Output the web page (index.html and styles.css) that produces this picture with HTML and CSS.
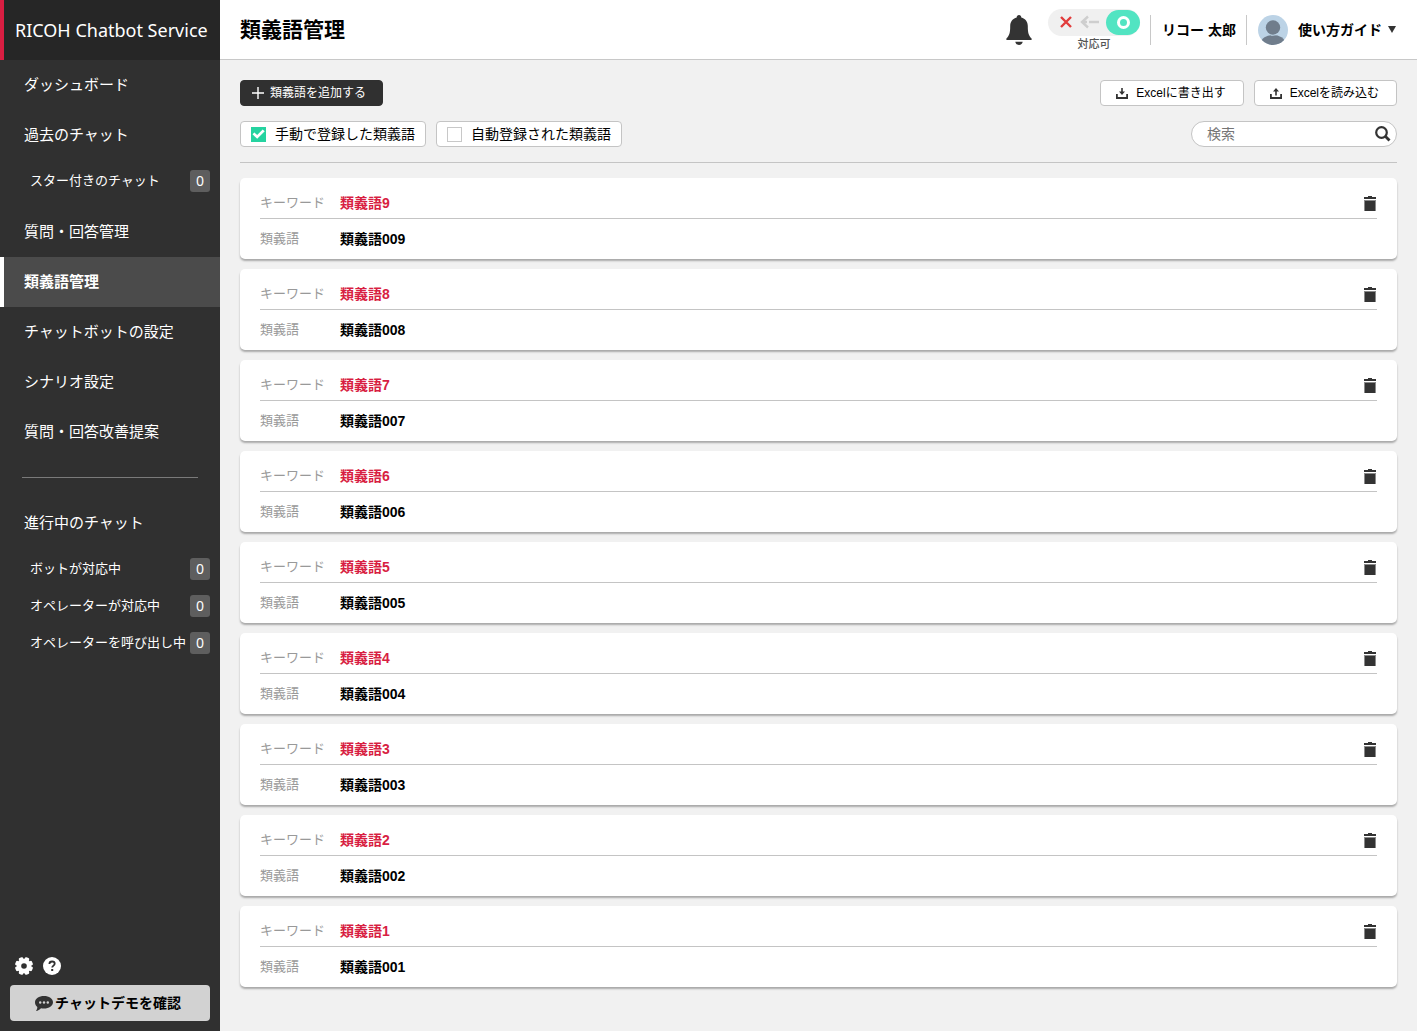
FILE: index.html
```html
<!DOCTYPE html>
<html lang="ja">
<head>
<meta charset="utf-8">
<meta name="viewport" content="width=device-width, initial-scale=1">
<title>類義語管理 | RICOH Chatbot Service</title>
<link rel="stylesheet" href="styles.css">
</head>
<body>
<svg class="sprite" width="0" height="0" aria-hidden="true">
  <symbol id="trash" viewBox="0 0 12 15">
    <path fill="#333" d="M4 0h4v1h4v2H0V1h4z"/>
    <path fill="#8a8a8a" d="M0 4h12v11H0z"/>
    <path fill="#333" d="M1 5h10v10H1z"/>
  </symbol>
</svg>
<aside class="sidebar">
  <a class="brand" href="#">RICOH Chatbot Service</a>
  <nav class="nav">
    <a class="nav-item" href="#">ダッシュボード</a>
    <a class="nav-item" href="#">過去のチャット</a>
    <div class="nav-sub">
      <a class="nav-subitem" href="#">スター付きのチャット<span class="count">0</span></a>
    </div>
    <a class="nav-item" href="#">質問・回答管理</a>
    <a class="nav-item is-active" href="#" aria-current="page">類義語管理</a>
    <a class="nav-item" href="#">チャットボットの設定</a>
    <a class="nav-item" href="#">シナリオ設定</a>
    <a class="nav-item" href="#">質問・回答改善提案</a>
    <hr class="nav-divider">
    <a class="nav-item" href="#">進行中のチャット</a>
    <div class="nav-sub">
      <a class="nav-subitem" href="#">ボットが対応中<span class="count">0</span></a>
      <a class="nav-subitem" href="#">オペレーターが対応中<span class="count">0</span></a>
      <a class="nav-subitem" href="#">オペレーターを呼び出し中<span class="count">0</span></a>
    </div>
  </nav>
  <div class="sidebar-foot">
    <div class="tools">
      <button class="icon-button" type="button" aria-label="設定">
        <svg width="18" height="18" viewBox="0 0 18 18"><g fill="#fff"><circle cx="9" cy="9" r="7.3"/><rect x="6.700" y="0" width="4.600" height="18" rx="1.200" transform="rotate(22.5 9 9)"/><rect x="6.700" y="0" width="4.600" height="18" rx="1.200" transform="rotate(67.5 9 9)"/><rect x="6.700" y="0" width="4.600" height="18" rx="1.200" transform="rotate(112.5 9 9)"/><rect x="6.700" y="0" width="4.600" height="18" rx="1.200" transform="rotate(157.5 9 9)"/></g><circle cx="9" cy="9" r="2.800" fill="#303030"/></svg>
      </button>
      <button class="icon-button" type="button" aria-label="ヘルプ">
        <svg width="18" height="18" viewBox="0 0 18 18"><circle cx="9" cy="9" r="9" fill="#fff"/><path d="M6.400 7c0-1.600 1.100-2.500 2.700-2.500s2.600.9 2.600 2.200c0 1.900-2.500 1.900-2.500 3.900" fill="none" stroke="#303030" stroke-width="1.800"/><rect x="8.200" y="12" width="2" height="2" fill="#303030"/></svg>
      </button>
    </div>
    <button class="demo" type="button">
      <svg width="18" height="15" viewBox="0 0 18 15"><path fill="#333" d="M9 0c5 0 9 2.700 9 6.300s-4 6.300-9 6.300c-1.100 0-2.100-.1-3-.4C4.700 13.600 3 14.700 1 15c.9-1.200 1.400-2.500 1.300-3.900C.9 9.900 0 8.200 0 6.300 0 2.700 4 0 9 0z"/><g fill="#d2d2d2"><circle cx="5.200" cy="6.500" r="1.200"/><circle cx="9" cy="6.500" r="1.200"/><circle cx="12.800" cy="6.500" r="1.200"/></g></svg>
      <span>チャットデモを確認</span>
    </button>
  </div>
</aside>
<div class="page">
  <header class="topbar">
    <h1 class="title">類義語管理</h1>
    <button class="icon-button bell" type="button" aria-label="通知">
      <svg width="26" height="30" viewBox="0 0 26 30"><path fill="#333" d="M13 0c1.400 0 2.300 1 2.300 2.400 4 1 6.500 4.100 6.500 8.600 0 7 .8 9.500 3.800 12.500V25H.4v-1.500c3-3 3.800-5.500 3.800-12.500 0-4.500 2.500-7.600 6.500-8.600C10.700 1 11.600 0 13 0zM9.300 26.800h7.400C16.500 28.600 15 30 13 30s-3.500-1.400-3.700-3.200z"/></svg>
    </button>
    <div class="status">
      <button class="switch" type="button" role="switch" aria-checked="true" aria-labelledby="status-label">
        <svg class="switch-off" width="42" height="14" viewBox="0 0 42 14" fill="none"><path d="M2 2l10 10M12 2L2 12" stroke="#e23c3c" stroke-width="2.400"/><path d="M29 1.500L23 7l6 5.500M24 7h4M30 7h10" stroke="#cecece" stroke-width="2.400"/></svg>
        <span class="knob"></span>
      </button>
      <span class="status-label" id="status-label">対応可</span>
    </div>
    <div class="user">リコー 太郎</div>
    <button class="guide" type="button">
      <svg width="30" height="30" viewBox="0 0 30 30"><defs><clipPath id="face"><circle cx="15" cy="15" r="15"/></clipPath></defs><g clip-path="url(#face)"><path fill="#bcd3e6" d="M0 0h30v30H0z"/><ellipse cx="15" cy="27.500" rx="12" ry="7.500" fill="#707d8c"/><circle cx="15" cy="12.500" r="8.200" fill="#bcd3e6"/><circle cx="15" cy="12.500" r="7.200" fill="#707d8c"/></g></svg>
      <span>使い方ガイド</span>
      <svg class="caret" width="8" height="7" viewBox="0 0 8 7"><path fill="#333" d="M0 0h8L4 7z"/></svg>
    </button>
  </header>
  <main class="content">
    <div class="toolbar">
      <button class="btn btn-dark" type="button">
        <svg width="12" height="12" viewBox="0 0 12 12"><path d="M6 0v12M0 6h12" stroke="#fff" stroke-width="1.400"/></svg>
        <span>類義語を追加する</span>
      </button>
      <div class="toolbar-end">
        <button class="btn" type="button">
          <svg width="12" height="11" viewBox="0 0 12 11"><path d="M.9 6v4h10.200V6" fill="none" stroke="#333" stroke-width="1.800"/><path fill="#333" d="M5.200 0h1.600v3.500H9L6 7 3 3.500h2.200z"/></svg>
          <span>Excelに書き出す</span>
        </button>
        <button class="btn" type="button">
          <svg width="12" height="11" viewBox="0 0 12 11"><path d="M.9 6v4h10.200V6" fill="none" stroke="#333" stroke-width="1.800"/><path fill="#333" d="M5.200 7.500h1.600v-4H9L6 0 3 3.500h2.200z"/></svg>
          <span>Excelを読み込む</span>
        </button>
      </div>
    </div>
    <div class="filters">
      <label class="filter"><input type="checkbox" checked>手動で登録した類義語</label>
      <label class="filter"><input type="checkbox">自動登録された類義語</label>
      <form class="search" role="search">
        <input type="text" placeholder="検索" aria-label="検索">
        <button class="icon-button" type="submit" aria-label="検索する">
          <svg width="16" height="16" viewBox="0 0 16 16" fill="none" stroke="#333"><circle cx="6.500" cy="6.500" r="5.300" stroke-width="2.200"/><path d="M10.300 10.300l4.200 4.200" stroke-width="2.800"/></svg>
        </button>
      </form>
    </div>
    <ul class="cards">
      <li class="card"><div class="row row-key"><span class="label">キーワード</span><a class="keyword" href="#">類義語9</a><button class="icon-button" type="button" aria-label="類義語9を削除"><svg width="12" height="15"><use href="#trash"/></svg></button></div><div class="row"><span class="label">類義語</span><span class="synonym">類義語009</span></div></li>
      <li class="card"><div class="row row-key"><span class="label">キーワード</span><a class="keyword" href="#">類義語8</a><button class="icon-button" type="button" aria-label="類義語8を削除"><svg width="12" height="15"><use href="#trash"/></svg></button></div><div class="row"><span class="label">類義語</span><span class="synonym">類義語008</span></div></li>
      <li class="card"><div class="row row-key"><span class="label">キーワード</span><a class="keyword" href="#">類義語7</a><button class="icon-button" type="button" aria-label="類義語7を削除"><svg width="12" height="15"><use href="#trash"/></svg></button></div><div class="row"><span class="label">類義語</span><span class="synonym">類義語007</span></div></li>
      <li class="card"><div class="row row-key"><span class="label">キーワード</span><a class="keyword" href="#">類義語6</a><button class="icon-button" type="button" aria-label="類義語6を削除"><svg width="12" height="15"><use href="#trash"/></svg></button></div><div class="row"><span class="label">類義語</span><span class="synonym">類義語006</span></div></li>
      <li class="card"><div class="row row-key"><span class="label">キーワード</span><a class="keyword" href="#">類義語5</a><button class="icon-button" type="button" aria-label="類義語5を削除"><svg width="12" height="15"><use href="#trash"/></svg></button></div><div class="row"><span class="label">類義語</span><span class="synonym">類義語005</span></div></li>
      <li class="card"><div class="row row-key"><span class="label">キーワード</span><a class="keyword" href="#">類義語4</a><button class="icon-button" type="button" aria-label="類義語4を削除"><svg width="12" height="15"><use href="#trash"/></svg></button></div><div class="row"><span class="label">類義語</span><span class="synonym">類義語004</span></div></li>
      <li class="card"><div class="row row-key"><span class="label">キーワード</span><a class="keyword" href="#">類義語3</a><button class="icon-button" type="button" aria-label="類義語3を削除"><svg width="12" height="15"><use href="#trash"/></svg></button></div><div class="row"><span class="label">類義語</span><span class="synonym">類義語003</span></div></li>
      <li class="card"><div class="row row-key"><span class="label">キーワード</span><a class="keyword" href="#">類義語2</a><button class="icon-button" type="button" aria-label="類義語2を削除"><svg width="12" height="15"><use href="#trash"/></svg></button></div><div class="row"><span class="label">類義語</span><span class="synonym">類義語002</span></div></li>
      <li class="card"><div class="row row-key"><span class="label">キーワード</span><a class="keyword" href="#">類義語1</a><button class="icon-button" type="button" aria-label="類義語1を削除"><svg width="12" height="15"><use href="#trash"/></svg></button></div><div class="row"><span class="label">類義語</span><span class="synonym">類義語001</span></div></li>
    </ul>
  </main>
</div>
</body>
</html>
```
FILE: styles.css
```css
*, *::before, *::after { box-sizing: border-box; }

body {
  margin: 0;
  min-height: 100vh;
  display: grid;
  grid-template-columns: 220px 1fr;
  background: #f1f1f1;
  color: #000;
  font: 14px/20px "Liberation Sans", "Noto Sans CJK JP", sans-serif;
}

a { color: inherit; text-decoration: none; }
button, input { font: inherit; color: inherit; }
button { cursor: pointer; }
svg { display: block; flex: none; }
.sprite { position: absolute; }

.icon-button {
  display: flex;
  padding: 0;
  border: 0;
  background: none;
}

/* Sidebar */
.sidebar {
  position: sticky;
  top: 0;
  height: 100vh;
  display: flex;
  flex-direction: column;
  background: #303030;
  color: #fff;
}

.brand {
  display: flex;
  align-items: center;
  flex: none;
  height: 60px;
  padding-left: 11px;
  border-left: 4px solid #d81e42;
  background: #262626;
  font-family: "Noto Sans", sans-serif;
  font-size: 18px;
  white-space: nowrap;
}

.nav { flex: 1; }

.nav-item {
  display: flex;
  align-items: center;
  height: 50px;
  padding-left: 20px;
  border-left: 4px solid transparent;
  font-size: 15px;
}

.nav-item.is-active {
  border-left-color: #fff;
  background: #4b4b4b;
  font-weight: bold;
}

.nav-sub { padding: 3px 10px 7px 30px; }

.nav-subitem {
  display: flex;
  align-items: center;
  justify-content: space-between;
  padding: 7px 0 8px;
  font-size: 13px;
  white-space: nowrap;
}

.count {
  width: 20px;
  border-radius: 3px;
  background: #5e5e5e;
  font-family: "Noto Sans", sans-serif;
  font-size: 14px;
  line-height: 22px;
  text-align: center;
}

.nav-divider {
  height: 1px;
  margin: 20px 22px;
  border: 0;
  background: #7a7a7a;
}

.sidebar-foot { padding: 10px; }

.tools {
  display: flex;
  gap: 10px;
  padding: 0 5px 10px;
}

.demo {
  display: flex;
  align-items: center;
  justify-content: center;
  gap: 2px;
  width: 100%;
  height: 36px;
  padding: 0 8px 0 4px;
  border: 0;
  border-radius: 4px;
  background: #d2d2d2;
  color: #000;
  font-weight: bold;
}

/* Top bar */
.topbar {
  display: flex;
  align-items: center;
  height: 60px;
  padding: 0 21px 0 20px;
  border-bottom: 1px solid #c8c8c8;
  background: #fff;
}

.title {
  flex: 1;
  margin: 0;
  font-size: 21px;
  line-height: 28px;
}

.status {
  display: flex;
  flex-direction: column;
  align-items: center;
  margin: 0 10px 0 16px;
}

.switch {
  display: flex;
  align-items: center;
  justify-content: space-between;
  width: 92px;
  height: 27px;
  padding: 1px 0 1px 11px;
  border: 0;
  border-radius: 14px;
  background: #f0f0f0;
}

.knob {
  display: grid;
  place-items: center;
  width: 34px;
  height: 25px;
  border-radius: 13px;
  background: #52e4c2;
}

.knob::after {
  content: "";
  width: 13px;
  height: 13px;
  border: 3px solid #fff;
  border-radius: 50%;
}

.status-label {
  padding-top: 1px;
  color: #555;
  font-size: 11px;
  font-weight: 500;
  line-height: 14px;
}

.user {
  padding: 0 10px 0 11px;
  border: solid #c8c8c8;
  border-width: 0 1px;
  font-weight: bold;
  line-height: 30px;
}

.guide {
  display: flex;
  align-items: center;
  gap: 10px;
  margin-left: 11px;
  padding: 0;
  border: 0;
  background: none;
  font-weight: bold;
}

.caret { margin-left: -4px; }

/* Content */
.content { padding: 20px 20px 40px; }

.toolbar, .toolbar-end, .filters {
  display: flex;
  gap: 10px;
}

.toolbar { justify-content: space-between; }

.btn {
  display: flex;
  align-items: center;
  gap: 8px;
  height: 26px;
  padding: 0 17px 0 15px;
  border: 1px solid #c4c4c4;
  border-radius: 4px;
  background: #fff;
  font-size: 12px;
}

.btn-dark {
  gap: 6px;
  padding: 0 16px 0 11px;
  border-color: #303030;
  background: #303030;
  color: #fff;
}

.filters {
  padding: 15px 0;
  border-bottom: 1px solid #c4c4c4;
}

.filter {
  display: flex;
  align-items: center;
  gap: 9px;
  height: 26px;
  padding: 0 10px;
  border: 1px solid #c4c4c4;
  border-radius: 4px;
  background: #fff;
}

.filter input {
  appearance: none;
  display: grid;
  width: 15px;
  height: 15px;
  margin: 0;
  border: 1px solid #c8c8c8;
  background: #fff;
}

.filter input:checked {
  border-color: #25d3a0;
  background: #25d3a0;
}

.filter input:checked::after {
  content: "";
  margin: 1px 0;
  background: #fff;
  clip-path: polygon(4% 52%, 18% 36%, 40% 58%, 82% 8%, 98% 24%, 40% 94%);
}

.search {
  display: flex;
  align-items: center;
  width: 206px;
  height: 26px;
  margin-left: auto;
  padding: 0 5px 0 15px;
  border: 1px solid #c4c4c4;
  border-radius: 13px;
  background: #fff;
}

.search input {
  flex: 1;
  min-width: 0;
  height: 20px;
  padding: 0;
  border: 0;
  outline: 0;
  background: none;
}

.search input::placeholder { color: #757575; }

.cards {
  display: grid;
  gap: 10px;
  margin: 15px 0 0;
  padding: 0;
  list-style: none;
}

.card {
  padding: 15px 20px 10px;
  border-radius: 5px;
  background: #fff;
  box-shadow: 0 2px 2px rgba(0, 0, 0, 0.3);
}

.row {
  display: flex;
  align-items: center;
  height: 20px;
}

.row-key {
  height: 26px;
  margin-bottom: 10px;
  padding-bottom: 5px;
  border-bottom: 1px solid #c4c4c4;
}

.row-key .icon-button { margin: 0 1px 0 auto; }

.label {
  width: 80px;
  color: #999;
  font-size: 13px;
}

.keyword, .synonym { font-weight: bold; }
.keyword { color: #d81e42; }
```
